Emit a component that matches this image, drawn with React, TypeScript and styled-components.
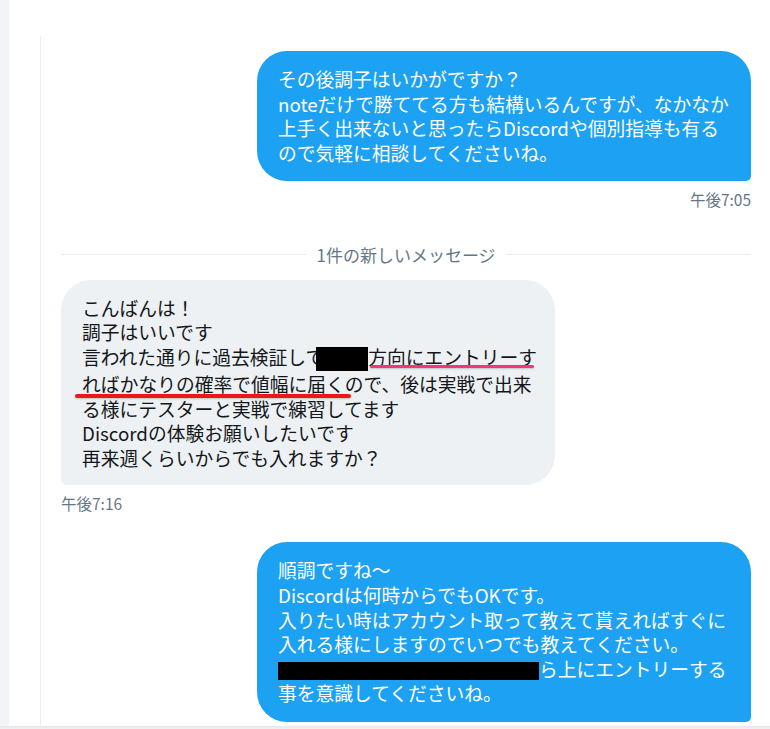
import React from "react";
import styled, { createGlobalStyle } from "styled-components";

const GlobalStyle = createGlobalStyle`
  html, body {
    margin: 0;
    padding: 0;
    background: #ffffff;
  }
  body {
    font-family: "Noto Sans CJK JP", "Noto Sans", sans-serif;
  }
`;

const App = () => {
  return (
    <>
      <GlobalStyle />
      <Screen>
        <Body>
          <SideStrip />
          <Gutter />
          <Thread>
            <MessageRow $out>
              <Bubble $out>
                <Line>その後調子はいかがですか？</Line>
                <Line>noteだけで勝ててる方も結構いるんですが、なかなか</Line>
                <Line>上手く出来ないと思ったらDiscordや個別指導も有る</Line>
                <Line>ので気軽に相談してくださいね。</Line>
              </Bubble>
              <Stamp>午後7:05</Stamp>
            </MessageRow>

            <Divider>
              <span>1件の新しいメッセージ</span>
            </Divider>

            <MessageRow>
              <Bubble>
                <Line>こんばんは！</Line>
                <Line>調子はいいです</Line>
                <Line>
                  言われた通りに過去検証して
                  <Redacted $w={52} $h={24} $shift={-8} />
                  方向にエントリーす
                </Line>
                <Line>ればかなりの確率で値幅に届くので、後は実戦で出来</Line>
                <Line>る様にテスターと実戦で練習してます</Line>
                <Line>Discordの体験お願いしたいです</Line>
                <Line>再来週くらいからでも入れますか？</Line>
                <Mark $color="#ec3a78" $left={309} $top={85} $width={164} $thick={3} />
                <Mark $color="#f01616" $left={14} $top={114} $width={276} $thick={4} />
              </Bubble>
              <Stamp>午後7:16</Stamp>
            </MessageRow>

            <MessageRow $out $gap={29}>
              <Bubble $out>
                <Line>順調ですね～</Line>
                <Line>Discordは何時からでもOKです。</Line>
                <Line>入りたい時はアカウント取って教えて貰えればすぐに</Line>
                <Line>入れる様にしますのでいつでも教えてください。</Line>
                <Line>
                  <Redacted $w={261} $h={18} $shift={0} />
                  ら上にエントリーする
                </Line>
                <Line>事を意識してくださいね。</Line>
              </Bubble>
            </MessageRow>
          </Thread>
        </Body>
        <BottomEdge />
      </Screen>
    </>
  );
};

const Screen = styled.div`
  height: 100vh;
  display: flex;
  flex-direction: column;
  overflow: hidden;
`;

const Body = styled.div`
  flex: 1;
  min-height: 0;
  display: flex;
`;

const SideStrip = styled.div`
  width: 9px;
  background: #f3f4f6;
`;

const Gutter = styled.div`
  width: 31px;
`;

const Thread = styled.div`
  flex: 1;
  margin-top: 36px;
  padding: 15px 19px 0 20px;
  border-left: 1px solid #eceff1;
  display: flex;
  flex-direction: column;
  overflow: hidden;
`;

const MessageRow = styled.div<{ $out?: boolean; $gap?: number }>`
  display: flex;
  flex-direction: column;
  align-items: ${(p) => (p.$out ? "flex-end" : "flex-start")};
  margin-top: ${(p) => p.$gap ?? 0}px;
`;

const Bubble = styled.div<{ $out?: boolean }>`
  position: relative;
  box-sizing: border-box;
  width: 494px;
  padding: ${(p) => (p.$out ? "16px 20px 16px 21px" : "15.5px 20px 15px 21px")};
  border-radius: ${(p) => (p.$out ? "30px 30px 5px 30px" : "30px 30px 30px 5px")};
  background: ${(p) => (p.$out ? "#1da1f2" : "#edf1f3")};
  color: ${(p) => (p.$out ? "#ffffff" : "#14171a")};
  font-size: 18.75px;
  line-height: 24.6px;
`;

const Line = styled.span`
  display: block;
  white-space: nowrap;
`;

const Redacted = styled.span<{ $w: number; $h: number; $shift: number }>`
  display: inline-block;
  width: ${(p) => p.$w}px;
  height: ${(p) => p.$h}px;
  margin-left: ${(p) => p.$shift}px;
  background: #000000;
  vertical-align: middle;
  position: relative;
  top: -1px;
`;

const Mark = styled.span<{ $color: string; $left: number; $top: number; $width: number; $thick: number }>`
  position: absolute;
  left: ${(p) => p.$left}px;
  top: ${(p) => p.$top}px;
  width: ${(p) => p.$width}px;
  height: ${(p) => p.$thick}px;
  border-radius: 2px;
  background: ${(p) => p.$color};
  box-shadow: 0 1px 2px rgba(0, 0, 0, 0.2);
`;

const Stamp = styled.div`
  margin-top: 8px;
  font-size: 15.5px;
  line-height: 20px;
  color: #657786;
`;

const Divider = styled.div`
  display: flex;
  align-items: center;
  gap: 10px;
  height: 24px;
  margin: 33px 0 14px;
  font-size: 17px;
  color: #657786;

  &::before,
  &::after {
    content: "";
    flex: 1;
    height: 1px;
    background: #e9eef1;
  }
`;

const BottomEdge = styled.div`
  height: 3px;
  background: linear-gradient(#e4e6e8, #f1f2f3);
`;

export default App;
